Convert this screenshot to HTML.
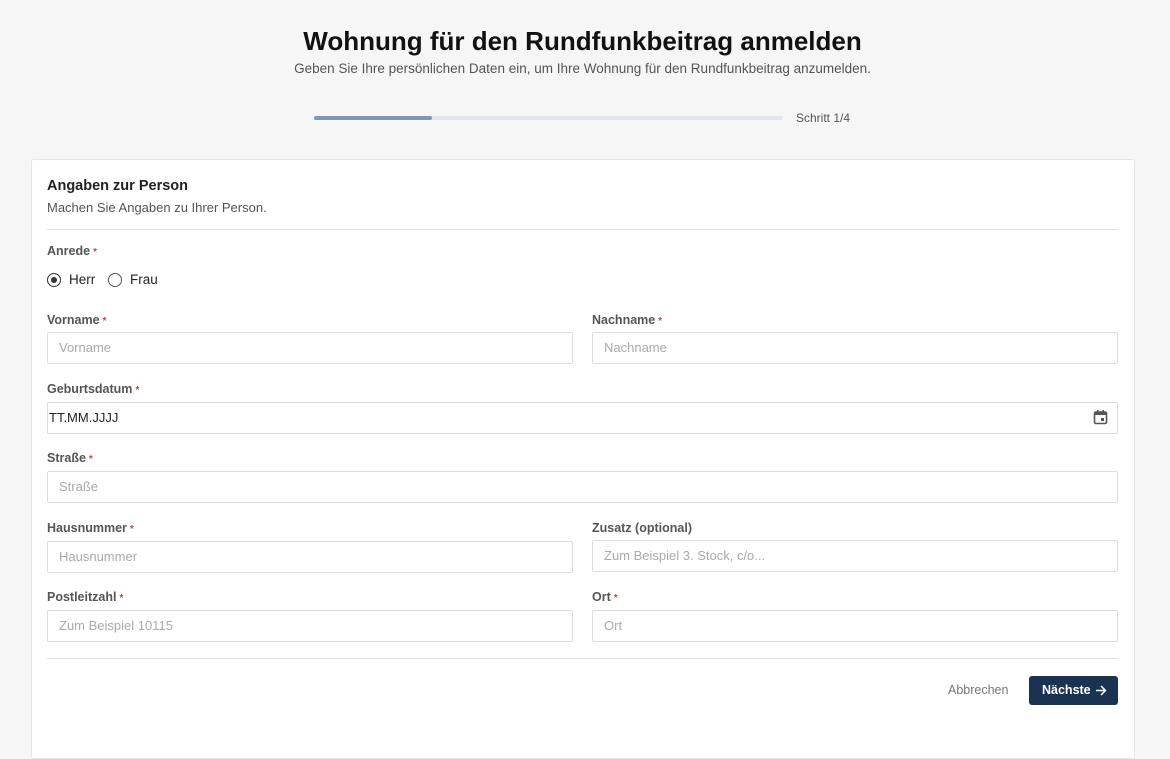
<!DOCTYPE html>
<html><head><meta charset="utf-8"><style>
*{box-sizing:border-box;margin:0;padding:0}
body{width:1170px;height:730px;background:#f6f6f6;font-family:"Liberation Sans",sans-serif;position:relative;overflow:hidden;color:#222}
.a{position:absolute}
h1{position:absolute;top:26px;left:0;width:1165px;text-align:center;font-size:26px;font-weight:bold;color:#111}
.sub{top:61px;left:0;width:1165px;text-align:center;font-size:13.5px;color:#555}
.card{left:31px;top:159px;width:1104px;height:600px;background:#fff;border:1px solid #e6e6e6;border-radius:3px}
.lbl{font-size:12.5px;font-weight:bold;color:#555}
.lbl i{font-style:normal;color:#c44;font-size:10px;margin-left:3px}
.in{height:32px;border:1px solid #ddd;border-radius:2px;background:#fff;font-size:13px;color:#aaa;padding:0 11px;line-height:30px}
.l{left:47px;width:526px}.r{left:592px;width:526px}.f{left:47px;width:1071px}
.hr{height:1px;background:#e3e3e3;left:47px;width:1071px}
</style></head><body>
<h1>Wohnung für den Rundfunkbeitrag anmelden</h1>
<div class="a sub">Geben Sie Ihre persönlichen Daten ein, um Ihre Wohnung für den Rundfunkbeitrag anzumelden.</div>
<div class="a" style="left:314px;top:116px;width:469px;height:4px;background:#e1e5ec;border-radius:2px"></div>
<div class="a" style="left:314px;top:116px;width:118px;height:4px;background:#8297b3;border-radius:2px"></div>
<div class="a" style="left:796px;top:111px;font-size:12px;color:#555">Schritt 1/4</div>
<div class="a card"></div>
<div class="a" style="left:47px;top:178px;font-size:14.5px;font-weight:bold;color:#222">Angaben zur Person</div>
<div class="a" style="left:47px;top:200px;font-size:13px;color:#555">Machen Sie Angaben zu Ihrer Person.</div>
<div class="a hr" style="top:229px"></div>
<div class="a lbl" style="left:47px;top:244px">Anrede<i>*</i></div>
<div class="a" style="left:47px;top:273px;width:14px;height:14px;border:1.5px solid #333;border-radius:50%"></div>
<div class="a" style="left:51px;top:277px;width:6px;height:6px;background:#333;border-radius:50%"></div>
<div class="a" style="left:69px;top:272px;font-size:13.5px">Herr</div>
<div class="a" style="left:108px;top:273px;width:14px;height:14px;border:1.2px solid #555;border-radius:50%"></div>
<div class="a" style="left:130px;top:272px;font-size:13.5px">Frau</div>

<div class="a lbl" style="left:47px;top:313px">Vorname<i>*</i></div>
<div class="a lbl" style="left:592px;top:313px">Nachname<i>*</i></div>
<div class="a in l" style="top:332px">Vorname</div>
<div class="a in r" style="top:332px">Nachname</div>

<div class="a lbl" style="left:47px;top:382px">Geburtsdatum<i>*</i></div>
<div class="a in f" style="top:402px;color:#222;padding-left:1px">TT.MM.JJJJ</div>
<svg class="a" style="left:1093px;top:409px" width="15" height="16" viewBox="0 0 15 16"><rect x="1.5" y="3" width="12" height="11.5" rx="1.5" fill="none" stroke="#555" stroke-width="1.6"/><rect x="1.5" y="3" width="12" height="3" fill="#555"/><rect x="4" y="1" width="1.6" height="3" fill="#555"/><rect x="9.4" y="1" width="1.6" height="3" fill="#555"/><rect x="8" y="9" width="3" height="3" fill="#555"/></svg>

<div class="a lbl" style="left:47px;top:451px">Straße<i>*</i></div>
<div class="a in f" style="top:471px">Straße</div>

<div class="a lbl" style="left:47px;top:521px">Hausnummer<i>*</i></div>
<div class="a lbl" style="left:592px;top:521px">Zusatz (optional)</div>
<div class="a in l" style="top:541px">Hausnummer</div>
<div class="a in r" style="top:540px">Zum Beispiel 3. Stock, c/o...</div>

<div class="a lbl" style="left:47px;top:590px">Postleitzahl<i>*</i></div>
<div class="a lbl" style="left:592px;top:590px">Ort<i>*</i></div>
<div class="a in l" style="top:610px">Zum Beispiel 10115</div>
<div class="a in r" style="top:610px">Ort</div>

<div class="a hr" style="top:658px"></div>
<div class="a" style="left:948px;top:683px;font-size:12.5px;color:#777">Abbrechen</div>
<div class="a" style="left:1029px;top:676px;width:89px;height:29px;background:#1b3352;border-radius:3px;color:#fff;font-size:12.5px;font-weight:bold;line-height:29px;padding-left:13px">Nächste</div>
<svg class="a" style="left:1095px;top:685px" width="12" height="11" viewBox="0 0 12 11"><path d="M1 5.5H10.5M6 1L10.5 5.5L6 10" fill="none" stroke="#fff" stroke-width="1.5"/></svg>
</body></html>
